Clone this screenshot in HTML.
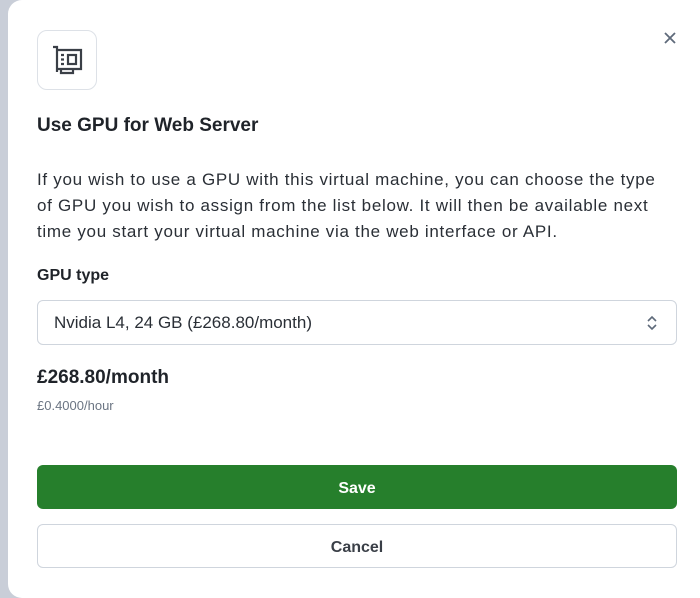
<!DOCTYPE html>
<html><head><style>
body{margin:0;width:700px;height:598px;background:#c9ced8;font-family:"Liberation Sans",sans-serif;overflow:hidden;position:relative;color:#1f2329}
.m{position:absolute;left:8px;top:0;width:720px;height:598px;background:#fff;border-radius:14px 0 0 14px}
.a{position:absolute}
.ic{left:37px;top:30px;width:60px;height:60px;border:1px solid #dde1e7;border-radius:10px;box-sizing:border-box}
.t{left:37px;top:115px;font-size:19px;font-weight:bold}
.p{left:37px;top:167px;font-size:17px;line-height:26px;white-space:nowrap;color:#2a2f36;letter-spacing:0.7px}
.l{left:37px;top:267px;font-size:16px;font-weight:bold}
.s{left:37px;top:300px;width:640px;height:45px;border:1px solid #cfd5dd;border-radius:6px;box-sizing:border-box;font-size:17px;line-height:43px;padding-left:16px;color:#2a2f36}
.pr{left:37px;top:367px;font-size:19px;font-weight:bold}
.h{left:37px;top:398px;font-size:13px;color:#6b7583}
.b{left:37px;width:640px;height:44px;border-radius:6px;box-sizing:border-box;text-align:center;font-size:16px;font-weight:bold;line-height:48px}
</style></head><body>
<div class="m"></div>
<div class="a ic"><svg width="60" height="60" viewBox="0 0 60 60" style="position:absolute;left:-1px;top:-1px" fill="none" stroke="#3a3f47" stroke-width="2.2"><path d="M16 17h4v25M20 20h24v19H20M24 39v4h12v-4"/><rect x="31" y="25" width="8" height="9"/><path d="M24 25h3M24 29.5h3M24 34h3"/></svg></div>
<svg class="a" style="left:663px;top:31px" width="14" height="14" viewBox="0 0 14 14" stroke="#5e6a7a" stroke-width="1.8"><path d="M2 2l10 10M12 2L2 12"/></svg>
<div class="a t">Use GPU for Web Server</div>
<div class="a p">If you wish to use a GPU with this virtual machine, you can choose the type<br>of GPU you wish to assign from the list below. It will then be available next<br>time you start your virtual machine via the web interface or API.</div>
<div class="a l">GPU type</div>
<div class="a s">Nvidia L4, 24 GB (£268.80/month)<svg style="position:absolute;right:18px;top:14px" width="12" height="16" viewBox="0 0 12 16" fill="none" stroke="#5e6a7a" stroke-width="1.6"><path d="M2 6l4-4 4 4M2 10l4 4 4-4"/></svg></div>
<div class="a pr">£268.80/month</div>
<div class="a h">£0.4000/hour</div>
<div class="a b" style="top:465px;background:#267f2c;color:#fff">Save</div>
<div class="a b" style="top:524px;border:1px solid #cfd5dd;color:#3a3f47;line-height:46px">Cancel</div>
</body></html>
